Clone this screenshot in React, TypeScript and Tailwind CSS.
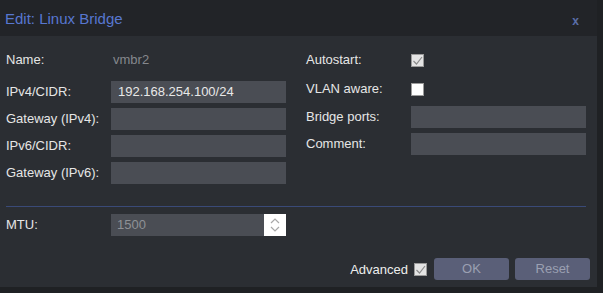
import React from 'react';

const font = { fontFamily: '"Liberation Sans", Arial, sans-serif' };

const TextField: React.FC<{ value?: string; className?: string }> = ({ value = '', className = 'w-[175px]' }) => (
  <div className={`h-[22px] bg-[#4a4d54] px-[7px] text-[13px] leading-[22px] text-[#e8e8e8] ${className}`}>{value}</div>
);

const Check: React.FC<{ checked?: boolean }> = ({ checked }) => (
  <div
    className={`w-[13px] h-[13px] border border-[#9a9a9a] flex items-center justify-center ${
      checked ? 'bg-[#e4e4e4]' : 'bg-white'
    }`}
  >
    {checked && (
      <svg width="11" height="11" viewBox="0 0 11 11">
        <path d="M1.5 6 L4.5 9 L10 2" fill="none" stroke="#8c8c8c" strokeWidth="1.2" />
      </svg>
    )}
  </div>
);

const Row: React.FC<{ label: string; children: React.ReactNode; className?: string }> = ({ label, children, className = '' }) => (
  <div className={`flex items-center h-[22px] ${className}`}>
    <div className="w-[105px] text-[13px] text-[#e6e6e6]">{label}</div>
    {children}
  </div>
);

export default function App() {
  return (
    <div className="w-[603px] h-[293px] bg-[#1f2124] overflow-hidden" style={font}>
      <div className="w-[597px] h-[287px] bg-[#2b2e33] flex flex-col">
        <div className="h-[36px] bg-[#222428] flex items-center justify-between pl-[5px] pr-[18px]">
          <span className="text-[15px] text-[#5877d0] pt-[2px]">Edit: Linux Bridge</span>
          <span className="text-[12px] text-[#5a6ea8] font-bold pt-[5px]">x</span>
        </div>

        <div className="flex gap-[20px] pl-[6px] pt-[13px]">
          <div className="w-[280px] flex flex-col">
            <Row label="Name:">
              <span className="pl-[2px] text-[13px] text-[#85888d]">vmbr2</span>
            </Row>
            <Row label="IPv4/CIDR:" className="mt-[10px]">
              <TextField value="192.168.254.100/24" />
            </Row>
            <Row label="Gateway (IPv4):" className="mt-[5px]">
              <TextField />
            </Row>
            <Row label="IPv6/CIDR:" className="mt-[5px]">
              <TextField />
            </Row>
            <Row label="Gateway (IPv6):" className="mt-[5px]">
              <TextField />
            </Row>
          </div>
          <div className="w-[280px] flex flex-col">
            <Row label="Autostart:">
              <Check checked />
            </Row>
            <Row label="VLAN aware:" className="mt-[7px]">
              <Check />
            </Row>
            <Row label="Bridge ports:" className="mt-[6px]">
              <TextField />
            </Row>
            <Row label="Comment:" className="mt-[5px]">
              <TextField />
            </Row>
          </div>
        </div>

        <div className="mx-[6px] mt-[22px] w-[580px] h-[1px] bg-[#3a4a78]" />

        <div className="pl-[6px] mt-[7px]">
          <Row label="MTU:">
            <div className="flex w-[175px] h-[22px]">
              <div className="flex-1 bg-[#4a4d54] px-[6px] text-[13px] leading-[22px] text-[#8e9196]">1500</div>
              <div className="w-[22px] bg-white flex items-center justify-center">
                <svg width="12" height="18" viewBox="0 0 12 18">
                  <path d="M2 7 L6 3 L10 7" fill="none" stroke="#a8a8a8" strokeWidth="1.2" />
                  <path d="M2 11 L6 15 L10 11" fill="none" stroke="#a8a8a8" strokeWidth="1.2" />
                </svg>
              </div>
            </div>
          </Row>
        </div>

        <div className="flex-1" />

        <div className="flex items-center justify-end pr-[7px] pb-[7px]">
          <span className="text-[13px] text-[#eeeeee] mr-[6px] pt-[2px]">Advanced</span>
          <Check checked />
          <button className="ml-[7px] w-[75px] h-[22px] rounded-[3px] bg-[#5a5f78] text-[13px] text-[#9ba0b2]">OK</button>
          <button className="ml-[6px] w-[75px] h-[22px] rounded-[3px] bg-[#5a5f78] text-[13px] text-[#9ba0b2]">Reset</button>
        </div>
      </div>
    </div>
  );
}
